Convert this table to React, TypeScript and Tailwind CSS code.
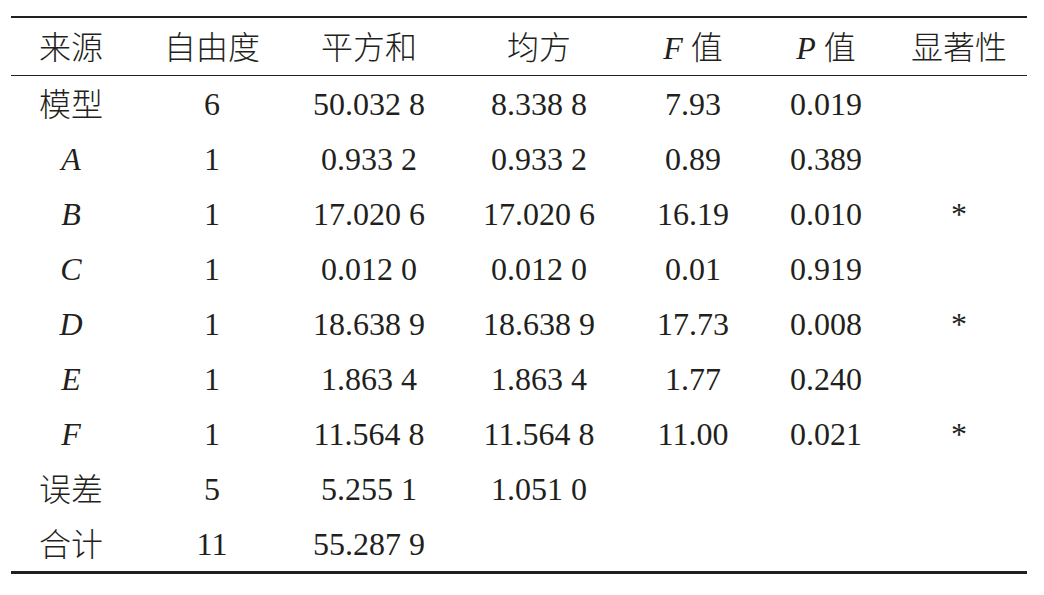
import React from "react";

type Cell = React.ReactNode;

function I({ c }: { c: string }) {
  return <span className="italic [font-family:Liberation_Serif,Times_New_Roman,serif]">{c}</span>;
}

function Z({ c }: { c: string }) {
  return (
    <span className="[font-family:Noto_Sans_CJK_SC,sans-serif] font-light">{c}</span>
  );
}

const rows: Cell[][] = [
  [<Z c="模型" />, "6", "50.032 8", "8.338 8", "7.93", "0.019", ""],
  [<I c="A" />, "1", "0.933 2", "0.933 2", "0.89", "0.389", ""],
  [<I c="B" />, "1", "17.020 6", "17.020 6", "16.19", "0.010", "*"],
  [<I c="C" />, "1", "0.012 0", "0.012 0", "0.01", "0.919", ""],
  [<I c="D" />, "1", "18.638 9", "18.638 9", "17.73", "0.008", "*"],
  [<I c="E" />, "1", "1.863 4", "1.863 4", "1.77", "0.240", ""],
  [<I c="F" />, "1", "11.564 8", "11.564 8", "11.00", "0.021", "*"],
  [<Z c="误差" />, "5", "5.255 1", "1.051 0", "", "", ""],
  [<Z c="合计" />, "11", "55.287 9", "", "", "", ""],
];

const header: Cell[] = [
  <Z c="来源" />,
  <Z c="自由度" />,
  <Z c="平方和" />,
  <Z c="均方" />,
  <span>
    <I c="F" /> <Z c="值" />
  </span>,
  <span>
    <I c="P" /> <Z c="值" />
  </span>,
  <Z c="显著性" />,
];

export default function App() {
  return (
    <div className="w-[1044px] h-[595px] bg-white text-[#231f20] font-serif text-[32px] leading-none pt-[16px] pl-[11px]">
      <div className="w-[1016px] border-t-[2.5px] border-b-[3px] border-[#231f20]">
        <div className="grid grid-cols-[120px_162px_152px_188px_120px_146px_128px] h-[58px] border-b-[1.5px] border-[#231f20] items-center">
          {header.map((h, i) => (
            <div
              key={i}
              className={
                i === 6
                  ? "text-center pr-2 [font-family:Liberation_Serif,Times_New_Roman,serif]"
                  : "text-center [font-family:Liberation_Serif,Times_New_Roman,serif]"
              }
            >
              {h}
            </div>
          ))}
        </div>
        {rows.map((r, ri) => (
          <div key={ri} className="grid grid-cols-[120px_162px_152px_188px_120px_146px_128px] h-[55px] items-center">
            {r.map((c, ci) => (
              <div
                key={ci}
                className={
                  ci === 6
                    ? "text-center pr-2 [font-family:Liberation_Serif,Times_New_Roman,serif]"
                    : "text-center [font-family:Liberation_Serif,Times_New_Roman,serif]"
                }
              >
                {c}
              </div>
            ))}
          </div>
        ))}
      </div>
    </div>
  );
}
